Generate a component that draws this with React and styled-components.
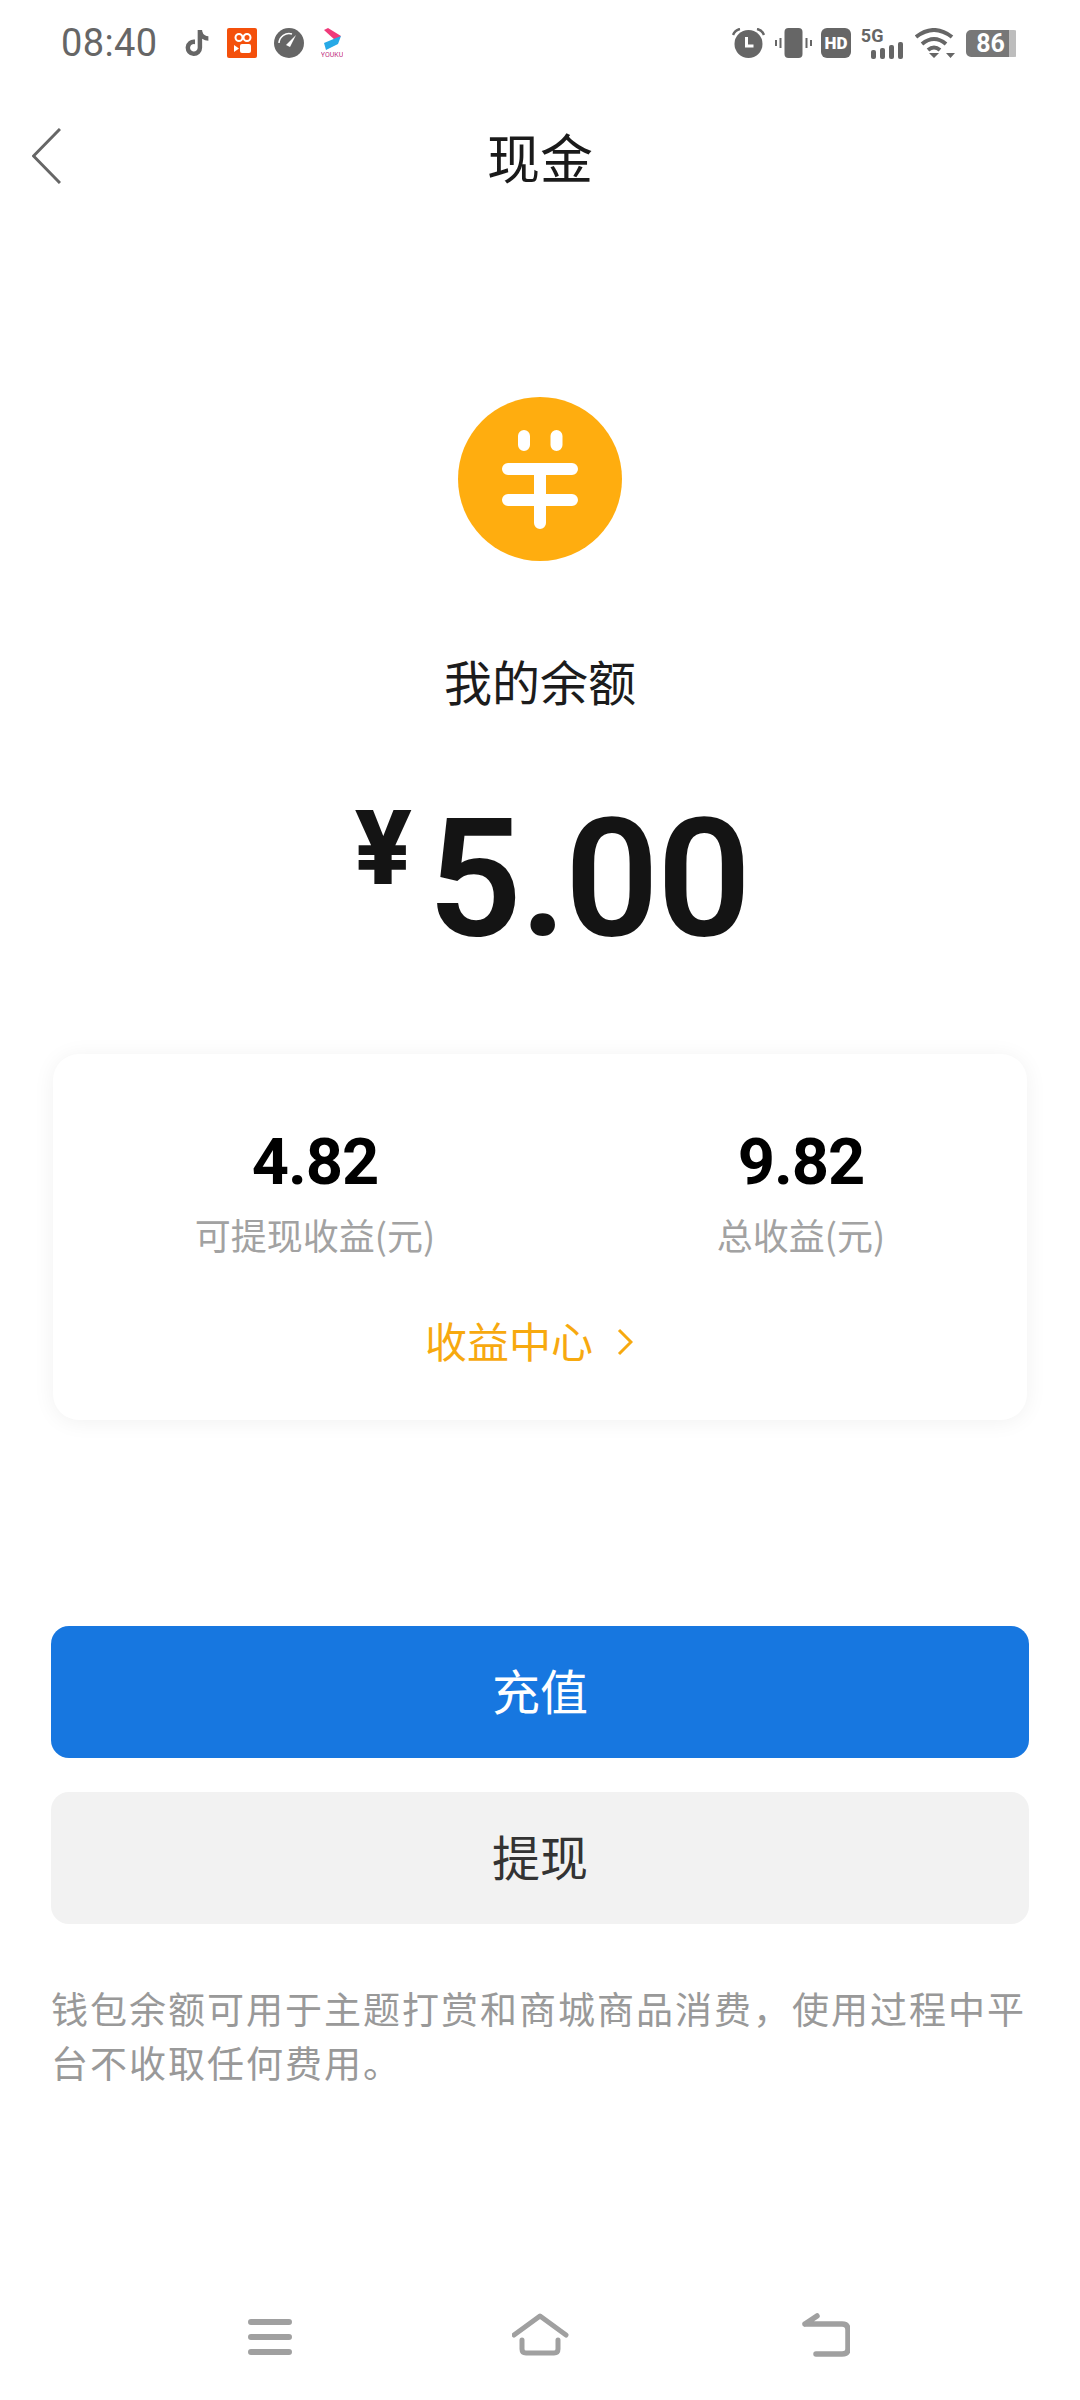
import React from 'react';
import styled, { createGlobalStyle } from 'styled-components';
import { FaTiktok } from 'react-icons/fa';

const GlobalStyle = createGlobalStyle`
  html, body {
    margin: 0;
    padding: 0;
    background: #fff;
  }
  * {
    box-sizing: border-box;
  }
`;

const Page = styled.div`
  width: 1080px;
  height: 2400px;
  display: flex;
  flex-direction: column;
  align-items: stretch;
  background: #fff;
  font-family: "Noto Sans CJK SC", "Noto Sans", sans-serif;
  overflow: hidden;
`;

const StatusBar = styled.div`
  height: 86px;
  padding: 0 60px 0 61px;
  display: flex;
  align-items: center;
  justify-content: space-between;
  color: #666;
`;

const StatusGroup = styled.div`
  display: flex;
  align-items: center;
  gap: ${props => props.gap || 10}px;
`;

const Time = styled.span`
  font-family: Roboto, sans-serif;
  font-size: 38px;
  letter-spacing: 0.4px;
  margin-right: 9px;
`;

const SignalBox = styled.div`
  width: 45px;
  display: flex;
  flex-direction: column;
`;

const SignalLabel = styled.span`
  font-family: Roboto, sans-serif;
  font-size: 18px;
  font-weight: 700;
  line-height: 15px;
  margin-bottom: -1px;
`;

const Battery = styled.div`
  width: 54px;
  height: 27px;
  display: flex;
  align-items: center;
  justify-content: center;
  padding-right: 5px;
  border-radius: 5px 6px 6px 5px;
  background: linear-gradient(90deg, #777 0, #777 80%, #bdbdbd 80%, #bdbdbd 93%, #fff 93%);
  font-family: Roboto, sans-serif;
  font-size: 25px;
  font-weight: 700;
  line-height: 27px;
  color: #fff;
`;

const NavBar = styled.div`
  height: 140px;
  display: grid;
  grid-template-columns: 1fr auto 1fr;
  align-items: center;
`;

const BackSlot = styled.div`
  padding-left: 32px;
  display: flex;
`;

const Title = styled.h1`
  margin: 0;
  font-size: 53px;
  font-weight: 400;
  line-height: 60px;
  color: #1a1a1a;
`;

const Hero = styled.div`
  margin-top: 171px;
  display: flex;
  flex-direction: column;
  align-items: center;
`;

const BalanceLabel = styled.div`
  margin-top: 89px;
  font-size: 48px;
  line-height: 60px;
  color: #1c1c1c;
`;

const Amount = styled.div`
  margin: 79px 0 0 23px;
  height: 180px;
  display: flex;
  align-items: flex-start;
  color: #141414;
  font-family: Roboto, sans-serif;
`;

const Currency = styled.span`
  font-family: Inter, sans-serif;
  font-size: 102px;
  font-weight: 800;
  line-height: 116px;
  margin-right: 15px;
`;

const AmountValue = styled.span`
  font-size: 165px;
  font-weight: 600;
  line-height: 180px;
  letter-spacing: -2px;
`;

const Card = styled.section`
  margin: 85px 53px 0;
  height: 366px;
  padding-top: 76px;
  border-radius: 26px;
  background: #fff;
  box-shadow: 0 2px 22px rgba(0, 0, 0, 0.06);
`;

const Stats = styled.div`
  display: flex;
`;

const Stat = styled.div`
  flex: 0 0 ${props => props.width}px;
  display: flex;
  flex-direction: column;
  align-items: center;
`;

const StatValue = styled.div`
  font-family: Roboto, sans-serif;
  font-size: 65px;
  font-weight: 700;
  line-height: 64px;
  letter-spacing: -1px;
  color: #000;
`;

const StatLabel = styled.div`
  margin-top: 15px;
  font-size: 36px;
  line-height: 50px;
  color: #a2a2a2;
`;

const IncomeLink = styled.div`
  margin-top: 51px;
  padding-right: 22px;
  display: flex;
  align-items: center;
  justify-content: center;
  gap: 24px;
  font-size: 42px;
  line-height: 60px;
  color: #f7a90f;

  svg {
    margin-top: 4px;
  }
`;

const Button = styled.div`
  height: 132px;
  margin: ${props => props.top}px 51px 0;
  padding-bottom: 6px;
  display: flex;
  align-items: center;
  justify-content: center;
  border-radius: 18px;
  font-size: 48px;
  background: ${props => (props.primary ? '#1777e0' : '#f2f2f2')};
  color: ${props => (props.primary ? '#fff' : '#333')};
`;

const Note = styled.p`
  margin: 57px 51px 0;
  font-size: 37px;
  line-height: 54px;
  letter-spacing: 2px;
  color: #999;
`;

const BottomNav = styled.nav`
  margin-top: auto;
  height: 87px;
  padding-left: 248px;
  display: grid;
  grid-template-columns: 264px 290px auto;
  color: #a0a0a0;
`;

const AlarmIcon = () => (
  <svg width="33" height="30" viewBox="0 0 33 30">
    <circle cx="16.5" cy="16" r="14" fill="#666" />
    <path d="M14.5 9v9h7" fill="none" stroke="#fff" strokeWidth="3" />
    <path d="M1 7 Q3 2 8 1M32 7 Q30 2 25 1" fill="none" stroke="#666" strokeWidth="2.5" />
  </svg>
);

const VibrateIcon = () => (
  <svg width="37" height="30" viewBox="0 0 37 30">
    <rect x="9.5" y="0" width="18" height="30" rx="4" fill="#666" />
    <path d="M5.5 10v10M1 12v6M31.5 10v10M36 12v6" stroke="#666" strokeWidth="2" />
  </svg>
);

const HdIcon = () => (
  <svg width="30" height="30" viewBox="0 0 30 30">
    <rect width="30" height="30" rx="6" fill="#666" />
    <text x="15" y="21" textAnchor="middle" fontFamily="Roboto, sans-serif" fontWeight="900" fontSize="17" fill="#fff">HD</text>
  </svg>
);

const SignalBars = () => (
  <svg width="45" height="17" viewBox="0 0 45 17">
    <rect x="10" y="8" width="5" height="9" rx="2" fill="#666" />
    <rect x="19" y="6" width="5" height="11" rx="2" fill="#666" />
    <rect x="28" y="3" width="5" height="14" rx="2" fill="#666" />
    <rect x="37" y="0" width="5" height="17" rx="2" fill="#666" />
  </svg>
);

const WifiIcon = () => (
  <svg width="41" height="30" viewBox="0 0 41 30">
    <path d="M1 9 Q19 -5 37 9M7 16 Q19 6 31 16M13 22 Q19 17 25 22" fill="none" stroke="#666" strokeWidth="4" />
    <path d="M14 25h10l-5 5zM31 25h9l-4.500 5z" fill="#666" />
  </svg>
);

const KuaishouIcon = () => (
  <svg width="30" height="30" viewBox="0 0 30 30">
    <rect width="30" height="30" rx="2" fill="#f4500b" />
    <circle cx="12" cy="9.500" r="3.500" fill="none" stroke="#fff" strokeWidth="2" />
    <circle cx="20" cy="9.500" r="3.500" fill="none" stroke="#fff" strokeWidth="2" />
    <rect x="13" y="16" width="11" height="9" rx="2" fill="#fff" />
    <path d="M7 17l5 3.500-5 3.500z" fill="#fff" />
  </svg>
);

const GaugeIcon = () => (
  <svg width="30" height="30" viewBox="0 0 30 30">
    <circle cx="15" cy="15" r="15" fill="#666" />
    <path d="M5 15a10 10 0 0 1 13-9" fill="none" stroke="#fff" strokeWidth="1.500" />
    <path d="M12 17l10-10-6 12z" fill="#fff" />
  </svg>
);

const YoukuIcon = () => (
  <svg width="22" height="30" viewBox="0 0 22 30">
    <path d="M3 2l4-2 13 8-5 5z" fill="#f03a7a" />
    <path d="M3 15l12-5 5-2-3 8-12 6z" fill="#27a9e6" />
    <text x="11" y="29" textAnchor="middle" fontFamily="Roboto, sans-serif" fontSize="7" fill="#c2307f">YOUKU</text>
  </svg>
);

const BackIcon = () => (
  <svg width="29" height="56" viewBox="0 0 29 56">
    <path d="M28 1L1.500 28 28 55" fill="none" stroke="#666" strokeWidth="3" />
  </svg>
);

const CoinIcon = () => (
  <svg width="164" height="164" viewBox="0 0 164 164">
    <circle cx="82" cy="82" r="82" fill="#ffad0f" />
    <path
      d="M66 39v9M98.500 39v9M50 72h64M50 103h64M82 72v54"
      fill="none"
      stroke="#fff"
      strokeWidth="12"
      strokeLinecap="round"
    />
  </svg>
);

const ChevronIcon = () => (
  <svg width="16" height="28" viewBox="0 0 16 28">
    <path d="M2 2l12 12L2 26" fill="none" stroke="#f7a90f" strokeWidth="3" />
  </svg>
);

const MenuIcon = () => (
  <svg width="44" height="44" viewBox="0 0 44 44">
    <path d="M3 9h38M3 24h38M3 39h38" stroke="currentColor" strokeWidth="6" strokeLinecap="round" />
  </svg>
);

const HomeIcon = () => (
  <svg width="58" height="44" viewBox="0 0 58 44">
    <path d="M2 22L28 3l26 19" fill="none" stroke="currentColor" strokeWidth="5" strokeLinecap="round" strokeLinejoin="round" />
    <path d="M10 27v9q0 4 4 4h28q4 0 4-4v-9" fill="none" stroke="currentColor" strokeWidth="5" strokeLinecap="round" />
  </svg>
);

const ReturnIcon = () => (
  <svg width="48" height="44" viewBox="0 0 48 44">
    <path
      d="M3 11l12-8M3 11h37q6 0 6 6v19q0 5-6 5H14"
      fill="none"
      stroke="currentColor"
      strokeWidth="5.500"
      strokeLinecap="round"
    />
  </svg>
);

const App = () => (
  <Page>
    <GlobalStyle />
    <StatusBar>
      <StatusGroup gap={17}>
        <Time>08:40</Time>
        <FaTiktok size={26} />
        <KuaishouIcon />
        <GaugeIcon />
        <YoukuIcon />
      </StatusGroup>
      <StatusGroup gap={9.6}>
        <AlarmIcon />
        <VibrateIcon />
        <HdIcon />
        <SignalBox>
          <SignalLabel>5G</SignalLabel>
          <SignalBars />
        </SignalBox>
        <WifiIcon />
        <Battery>86</Battery>
      </StatusGroup>
    </StatusBar>

    <NavBar>
      <BackSlot>
        <BackIcon />
      </BackSlot>
      <Title>现金</Title>
    </NavBar>

    <Hero>
      <CoinIcon />
      <BalanceLabel>我的余额</BalanceLabel>
      <Amount>
        <Currency>¥</Currency>
        <AmountValue>5.00</AmountValue>
      </Amount>
    </Hero>

    <Card>
      <Stats>
        <Stat width={524}>
          <StatValue>4.82</StatValue>
          <StatLabel>可提现收益(元)</StatLabel>
        </Stat>
        <Stat width={448}>
          <StatValue>9.82</StatValue>
          <StatLabel>总收益(元)</StatLabel>
        </Stat>
      </Stats>
      <IncomeLink>
        收益中心
        <ChevronIcon />
      </IncomeLink>
    </Card>

    <Button primary top={206}>充值</Button>
    <Button top={34}>提现</Button>

    <Note>钱包余额可用于主题打赏和商城商品消费，使用过程中平台不收取任何费用。</Note>

    <BottomNav>
      <MenuIcon />
      <HomeIcon />
      <ReturnIcon />
    </BottomNav>
  </Page>
);

export default App;
